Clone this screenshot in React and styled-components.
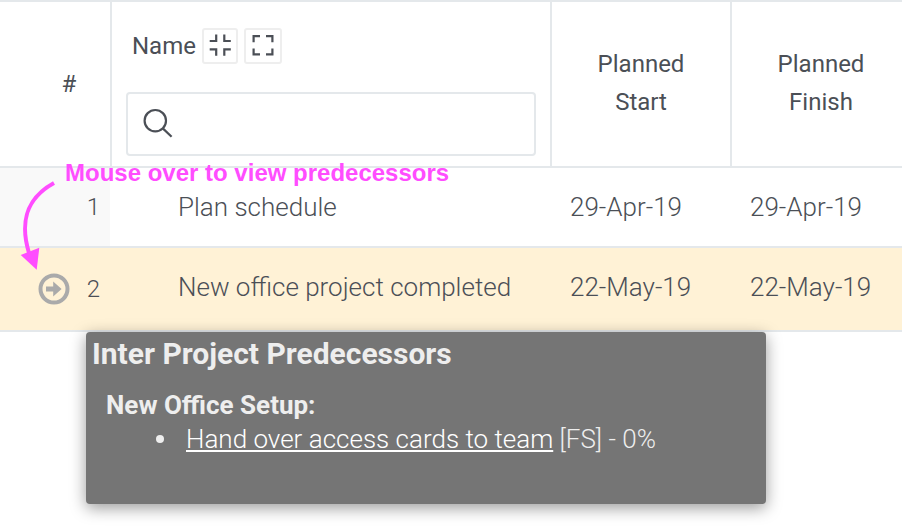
import { useState } from "react";
import styled, { createGlobalStyle } from "styled-components";

const GlobalStyle = createGlobalStyle`
  * {
    box-sizing: border-box;
  }

  body {
    margin: 0;
    background: #fff;
    color: #4b4f56;
    font-family: Roboto, "Liberation Sans", sans-serif;
  }
`;

const Page = styled.main`
  position: relative;
  min-height: 100vh;
  overflow: hidden;
`;

/* the last column runs slightly past the right edge of the view */
const Table = styled.table`
  width: calc(100% + 10px);
  table-layout: fixed;
  border-collapse: separate;
  border-spacing: 0;
  border-top: 2px solid #e4e8eb;
`;

const Col = styled.col`
  width: ${({ $width }) => $width || "auto"};
`;

const HeadCell = styled.th`
  padding: ${({ $padding }) => $padding || "0 40px 2px"};
  border-right: 2px solid #e4e8eb;
  border-bottom: 2px solid #e4e8eb;
  font-size: 24px;
  font-weight: 400;
  line-height: 38px;
  text-align: ${({ $align }) => $align || "center"};
`;

const NameBar = styled.div`
  display: flex;
  align-items: center;
  gap: 6px;
  height: 36px;
  margin-bottom: 28px;
  padding-left: 6px;
`;

const IconButton = styled.button`
  display: flex;
  height: 36px;
  padding: 5px 6px;
  background: #fff;
  border: 2px solid #eee;
  border-radius: 3px;
  color: #4b4f56;
  cursor: pointer;

  &:hover {
    background: #f9f9f9;
  }
`;

const SearchBox = styled.label`
  display: flex;
  align-items: center;
  gap: 12px;
  height: 64px;
  padding: 0 14px;
  border: 2px solid #e4e8eb;
  border-radius: 4px;
`;

const SearchInput = styled.input`
  flex: 1;
  min-width: 0;
  height: 100%;
  padding: 0;
  background: transparent;
  border: none;
  outline: none;
  color: inherit;
  font: inherit;
`;

const Row = styled.tr`
  height: ${({ $active }) => ($active ? "84px" : "80px")};
  background: ${({ $active }) => ($active ? "#fff2d6" : "#fff")};
`;

const Cell = styled.td`
  padding: 20px 0 0 ${({ $indent }) => ($indent ? "66px" : "18px")};
  border-bottom: 2px solid #e4e8eb;
  font-size: 26px;
  font-weight: 300;
  line-height: 38px;
  vertical-align: top;
  white-space: nowrap;
`;

const NumberCell = styled.td`
  position: relative;
  padding: 0 12px 0 38px;
  background: ${({ $active }) => ($active ? "transparent" : "#f9f9f9")};
  border-bottom: 2px solid #e4e8eb;
  box-shadow: ${({ $active }) => ($active ? "none" : "inset -2px 0 #fff")};
`;

const NumberLine = styled.div`
  display: flex;
  align-items: center;
  justify-content: space-between;
  font-size: 24px;
  font-weight: 300;
`;

const LinkButton = styled.button`
  display: flex;
  padding: 0;
  background: none;
  border: none;
  color: #aaa;
  cursor: pointer;
`;

const Tooltip = styled.div`
  position: absolute;
  top: calc(100% + 2px);
  left: 86px;
  z-index: 2;
  width: 680px;
  padding: 5px 6px 48px;
  background: #757575;
  border-radius: 4px;
  box-shadow: 0 4px 16px rgba(0, 0, 0, 0.4);
  color: #eee;
  font-size: 26px;
  font-weight: 300;
  line-height: 34px;
`;

const TooltipTitle = styled.h2`
  margin: 0 0 17px;
  font-size: 30px;
  font-weight: 700;
  line-height: 34px;
`;

const ProjectName = styled.h3`
  margin: 0 0 0 14px;
  font-size: 26px;
  font-weight: 700;
  line-height: 34px;
`;

const LinkList = styled.ul`
  margin: 0 0 0 14px;
  padding-left: 50px;
  list-style: none;
`;

const LinkItem = styled.li`
  display: flex;
  align-items: center;
  gap: 22px;

  &::before {
    content: "";
    width: 8px;
    height: 8px;
    background: currentColor;
    border-radius: 50%;
  }
`;

const TaskLink = styled.a`
  color: #fff;
  text-decoration: underline;
  text-decoration-thickness: 2px;
  text-underline-offset: 2px;
`;

const Callout = styled.div`
  position: absolute;
  top: 160px;
  left: 20px;
  z-index: 1;
  display: flex;
  gap: 5px;
  color: #ff4dff;
  font-family: "Liberation Sans", sans-serif;
  font-size: 24px;
  font-weight: 700;
  line-height: 26px;
  pointer-events: none;
`;

const CalloutArrow = styled.svg`
  margin-top: 20px;
`;

const CollapseIcon = () => (
  <svg width="20" height="22" viewBox="0 1 20 22" fill="none" stroke="currentColor" strokeWidth="2.2" overflow="visible" aria-hidden="true">
    <path d="M6.2 0.5V7H-0.3M14.3 0.5V7H20.8M-0.3 15.3H6.2V21.8M20.8 15.3H14.3V21.8" />
  </svg>
);

const ExpandIcon = () => (
  <svg width="22" height="22" viewBox="0 0 22 22" fill="none" stroke="currentColor" strokeWidth="2.2" aria-hidden="true">
    <path d="M1.6 7.2V1.2H8M14 1.2H20.4V7.2M1.6 13.6V19.4H8M14 19.4H20.4V13.6" />
  </svg>
);

const SearchIcon = () => (
  <svg width="32" height="32" viewBox="0 0 32 32" fill="none" stroke="currentColor" strokeWidth="2.2" aria-hidden="true">
    <circle cx="13.3" cy="12.7" r="10.7" />
    <path d="M20.8 20.4L29.6 28.8" />
  </svg>
);

const PredecessorIcon = () => (
  <svg width="32" height="32" viewBox="0 0 32 32" aria-hidden="true">
    <circle cx="16" cy="16" r="13.5" fill="none" stroke="currentColor" strokeWidth="4" />
    <path d="M8 13.5H15.2V8.5L23.6 16L15.2 23.5V18.5H8Z" fill="currentColor" />
  </svg>
);

const tasks = [
  { id: 1, name: "Plan schedule", start: "29-Apr-19", finish: "29-Apr-19" },
  {
    id: 2,
    name: "New office project completed",
    start: "22-May-19",
    finish: "22-May-19",
    predecessors: {
      project: "New Office Setup:",
      links: [{ task: "Hand over access cards to team", detail: "[FS] - 0%" }],
    },
  },
];

const PredecessorTooltip = ({ project, links }) => (
  <Tooltip role="tooltip" id="predecessors">
    <TooltipTitle>Inter Project Predecessors</TooltipTitle>
    <ProjectName>{project}</ProjectName>
    <LinkList>
      {links.map((link) => (
        <LinkItem key={link.task}>
          <span>
            <TaskLink href="#task">{link.task}</TaskLink> {link.detail}
          </span>
        </LinkItem>
      ))}
    </LinkList>
  </Tooltip>
);

export default function App() {
  const [search, setSearch] = useState("");
  const [activeId, setActiveId] = useState(2);

  return (
    <Page>
      <GlobalStyle />
      <Table>
        <colgroup>
          <Col $width="112px" />
          <Col />
          <Col $width="180px" />
          <Col $width="180px" />
        </colgroup>
        <thead>
          <tr>
            <HeadCell scope="col" $padding="0 0 0 28px">#</HeadCell>
            <HeadCell scope="col" $padding="26px 14px 10px" $align="left">
              <NameBar>
                <span>Name</span>
                <IconButton type="button" aria-label="Collapse all">
                  <CollapseIcon />
                </IconButton>
                <IconButton type="button" aria-label="Expand all">
                  <ExpandIcon />
                </IconButton>
              </NameBar>
              <SearchBox>
                <SearchIcon />
                <SearchInput
                  type="text"
                  aria-label="Search by name"
                  value={search}
                  onChange={(e) => setSearch(e.target.value)}
                />
              </SearchBox>
            </HeadCell>
            <HeadCell scope="col">Planned Start</HeadCell>
            <HeadCell scope="col">Planned Finish</HeadCell>
          </tr>
        </thead>
        <tbody>
          {tasks
            .filter((task) => task.name.toLowerCase().includes(search.toLowerCase()))
            .map((task) => {
              const active = task.id === activeId;
              return (
                <Row key={task.id} $active={active}>
                  <NumberCell $active={active}>
                    <NumberLine>
                      {task.predecessors ? (
                        <LinkButton
                          type="button"
                          aria-label="View predecessors"
                          aria-describedby="predecessors"
                          onMouseEnter={() => setActiveId(task.id)}
                        >
                          <PredecessorIcon />
                        </LinkButton>
                      ) : (
                        <span />
                      )}
                      <span>{task.id}</span>
                    </NumberLine>
                    {active && task.predecessors && (
                      <PredecessorTooltip {...task.predecessors} />
                    )}
                  </NumberCell>
                  <Cell $indent>{task.name}</Cell>
                  <Cell>{task.start}</Cell>
                  <Cell>{task.finish}</Cell>
                </Row>
              );
            })}
        </tbody>
      </Table>
      <Callout>
        <CalloutArrow width="40" height="92" viewBox="0 0 40 92" aria-hidden="true">
          <path d="M34 3C5 19 0 43 9 73" fill="none" stroke="currentColor" strokeWidth="4" />
          <path d="M0.7 75L19.3 67.7L16.7 89.7Z" fill="currentColor" />
        </CalloutArrow>
        <span>Mouse over to view predecessors</span>
      </Callout>
    </Page>
  );
}
